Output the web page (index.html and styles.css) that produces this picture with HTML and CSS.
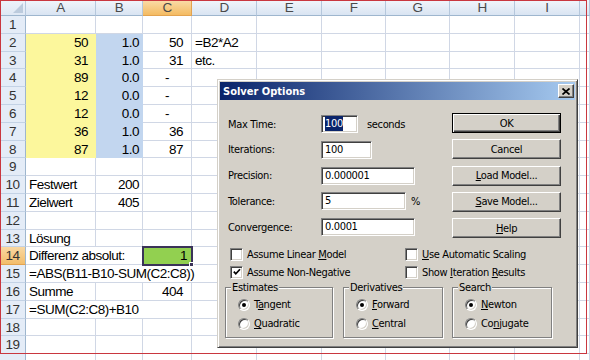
FILE: index.html
```html
<!DOCTYPE html>
<html>
<head>
<meta charset="utf-8">
<link rel="stylesheet" href="styles.css">
</head>
<body>
<div class="sheet">
  <div class="ch corner"><svg width="12" height="12" viewBox="0 0 12 12"><polygon points="11,1 11,11 1,11" fill="#bccbdd"/></svg></div>
  <div class="ch">A</div><div class="ch">B</div><div class="ch sel">C</div><div class="ch">D</div><div class="ch">E</div><div class="ch">F</div><div class="ch">G</div><div class="ch">H</div><div class="ch">I</div><div class="ch"></div>

  <div class="rh">1</div><div class="c"></div><div class="c"></div><div class="c"></div><div class="c"></div><div class="c"></div><div class="c"></div><div class="c"></div><div class="c"></div><div class="c"></div><div class="c"></div>

  <div class="rh">2</div><div class="c y n na">50</div><div class="c bl n nb">1.0</div><div class="c n nc">50</div><div class="c">=B2*A2</div><div class="c"></div><div class="c"></div><div class="c"></div><div class="c"></div><div class="c"></div><div class="c"></div>

  <div class="rh">3</div><div class="c y n na">31</div><div class="c bl n nb">1.0</div><div class="c n nc">31</div><div class="c">etc.</div><div class="c"></div><div class="c"></div><div class="c"></div><div class="c"></div><div class="c"></div><div class="c"></div>

  <div class="rh">4</div><div class="c y n na">89</div><div class="c bl n nb">0.0</div><div class="c n dash">-</div><div class="c"></div><div class="c"></div><div class="c"></div><div class="c"></div><div class="c"></div><div class="c"></div><div class="c"></div>

  <div class="rh">5</div><div class="c y n na">12</div><div class="c bl n nb">0.0</div><div class="c n dash">-</div><div class="c"></div><div class="c"></div><div class="c"></div><div class="c"></div><div class="c"></div><div class="c"></div><div class="c"></div>

  <div class="rh">6</div><div class="c y n na">12</div><div class="c bl n nb">0.0</div><div class="c n dash">-</div><div class="c"></div><div class="c"></div><div class="c"></div><div class="c"></div><div class="c"></div><div class="c"></div><div class="c"></div>

  <div class="rh">7</div><div class="c y n na">36</div><div class="c bl n nb">1.0</div><div class="c n nc">36</div><div class="c"></div><div class="c"></div><div class="c"></div><div class="c"></div><div class="c"></div><div class="c"></div><div class="c"></div>

  <div class="rh">8</div><div class="c y n na">87</div><div class="c bl n nb">1.0</div><div class="c n nc">87</div><div class="c"></div><div class="c"></div><div class="c"></div><div class="c"></div><div class="c"></div><div class="c"></div><div class="c"></div>

  <div class="rh">9</div><div class="c"></div><div class="c"></div><div class="c"></div><div class="c"></div><div class="c"></div><div class="c"></div><div class="c"></div><div class="c"></div><div class="c"></div><div class="c"></div>

  <div class="rh">10</div><div class="c">Festwert</div><div class="c n nb">200</div><div class="c"></div><div class="c"></div><div class="c"></div><div class="c"></div><div class="c"></div><div class="c"></div><div class="c"></div><div class="c"></div>

  <div class="rh">11</div><div class="c">Zielwert</div><div class="c n nb">405</div><div class="c"></div><div class="c"></div><div class="c"></div><div class="c"></div><div class="c"></div><div class="c"></div><div class="c"></div><div class="c"></div>

  <div class="rh">12</div><div class="c"></div><div class="c"></div><div class="c"></div><div class="c"></div><div class="c"></div><div class="c"></div><div class="c"></div><div class="c"></div><div class="c"></div><div class="c"></div>

  <div class="rh">13</div><div class="c">Lösung</div><div class="c"></div><div class="c"></div><div class="c"></div><div class="c"></div><div class="c"></div><div class="c"></div><div class="c"></div><div class="c"></div><div class="c"></div>

  <div class="rh sel">14</div><div class="c s2">Differenz absolut:</div><div class="c n cur">1</div><div class="c"></div><div class="c"></div><div class="c"></div><div class="c"></div><div class="c"></div><div class="c"></div><div class="c"></div>

  <div class="rh">15</div><div class="c s4">=ABS(B11-B10-SUM(C2:C8))</div><div class="c"></div><div class="c"></div><div class="c"></div><div class="c"></div><div class="c"></div><div class="c"></div>

  <div class="rh">16</div><div class="c">Summe</div><div class="c"></div><div class="c n nc">404</div><div class="c"></div><div class="c"></div><div class="c"></div><div class="c"></div><div class="c"></div><div class="c"></div><div class="c"></div>

  <div class="rh">17</div><div class="c s3">=SUM(C2:C8)+B10</div><div class="c"></div><div class="c"></div><div class="c"></div><div class="c"></div><div class="c"></div><div class="c"></div><div class="c"></div>

  <div class="rh">18</div><div class="c"></div><div class="c"></div><div class="c"></div><div class="c"></div><div class="c"></div><div class="c"></div><div class="c"></div><div class="c"></div><div class="c"></div><div class="c"></div>

  <div class="rh">19</div><div class="c"></div><div class="c"></div><div class="c"></div><div class="c"></div><div class="c"></div><div class="c"></div><div class="c"></div><div class="c"></div><div class="c"></div><div class="c"></div>

  <div class="rh"></div><div class="c"></div><div class="c"></div><div class="c"></div><div class="c"></div><div class="c"></div><div class="c"></div><div class="c"></div><div class="c"></div><div class="c"></div><div class="c"></div>
</div>

<div class="dlg">
  <div class="title">
    <span class="title-text">Solver Options</span>
    <span class="xbtn"><svg width="8" height="7" viewBox="0 0 8 7"><path d="M0.5 0.5 L7.5 6.5 M7.5 0.5 L0.5 6.5" stroke="#000" stroke-width="1.7"/></svg></span>
  </div>
  <div class="dbody">
    <div class="main">
      <div class="fields">
        <div class="frow"><span class="lbl">Max Time:</span><span class="inp w37"><span class="hl">100</span></span><span class="unit u9">seconds</span></div>
        <div class="frow"><span class="lbl">Iterations:</span><span class="inp w51">100</span></div>
        <div class="frow"><span class="lbl">Precision:</span><span class="inp w94">0.000001</span></div>
        <div class="frow"><span class="lbl">Tolerance:</span><span class="inp w85">5</span><span class="unit u5">%</span></div>
        <div class="frow"><span class="lbl">Convergence:</span><span class="inp w94">0.0001</span></div>
      </div>
      <div class="btns">
        <div class="btn def">OK</div>
        <div class="btn">Cancel</div>
        <div class="btn"><u>L</u>oad Model...</div>
        <div class="btn"><u>S</u>ave Model...</div>
        <div class="btn"><u>H</u>elp</div>
      </div>
    </div>
    <div class="checks">
      <div class="chk"><span class="cb"></span><span>Assume Linear <u>M</u>odel</span></div>
      <div class="chk"><span class="cb"></span><span><u>U</u>se Automatic Scaling</span></div>
      <div class="chk"><span class="cb"><svg width="8" height="8" viewBox="0 0 8 8"><path d="M0.8 3.6 L2.8 5.8 L7 1.2" fill="none" stroke="#000" stroke-width="1.7"/></svg></span><span>Assume Non-Negative</span></div>
      <div class="chk"><span class="cb"></span><span>Show <u>I</u>teration <u>R</u>esults</span></div>
    </div>
    <div class="groups">
      <fieldset class="grp g108">
        <legend>Estimates</legend>
        <div class="opt"><span class="rd on"></span><span>T<u>a</u>ngent</span></div>
        <div class="opt"><span class="rd"></span><span><u>Q</u>uadratic</span></div>
      </fieldset>
      <fieldset class="grp g100">
        <legend>Derivatives</legend>
        <div class="opt"><span class="rd on"></span><span><u>F</u>orward</span></div>
        <div class="opt"><span class="rd"></span><span><u>C</u>entral</span></div>
      </fieldset>
      <fieldset class="grp g100">
        <legend>Search</legend>
        <div class="opt"><span class="rd on"></span><span><u>N</u>ewton</span></div>
        <div class="opt"><span class="rd"></span><span>Co<u>n</u>jugate</span></div>
      </fieldset>
    </div>
  </div>
</div>

<div class="frame"></div>
</body>
</html>
```

FILE: styles.css
```css
html, body {
  margin: 0;
  padding: 0;
  background: #ffffff;
  overflow: hidden;
}
body {
  width: 590px;
  height: 360px;
  position: relative;
}

/* ---------- sheet ---------- */
.sheet {
  display: grid;
  grid-template-columns: 26px 70px 47px 49px 65px 65px 64px 64px 65px 65px 10px;
  grid-template-rows: 16px repeat(20, 17.8px);
  font-family: "Liberation Sans", Arial, sans-serif;
  font-size: 13.5px;
  letter-spacing: -0.5px;
  color: #000;
}
.ch {
  box-sizing: border-box;
  background: linear-gradient(#f2f6fb, #d9e4f2);
  border-right: 1px solid #b5c7dc;
  border-bottom: 1px solid #9eb6ce;
  text-align: center;
  line-height: 15px;
  color: #4a4a4a;
}
.ch.sel {
  background: linear-gradient(#fadcaa, #f4bb62);
  border-right-color: #e3a34f;
  border-bottom-color: #e3a34f;
}
.corner {
  display: flex;
  align-items: flex-end;
  justify-content: flex-end;
  background: linear-gradient(#eef3fa, #dfe8f4);
}
.corner svg {
  display: block;
  margin: 0 1px 1px 0;
}
.rh {
  box-sizing: border-box;
  background: #e4ecf7;
  border-right: 1px solid #9eb6ce;
  border-bottom: 1px solid #c3d2e5;
  text-align: center;
  line-height: 17.8px;
  color: #333;
}
.rh.sel {
  background: linear-gradient(#f9d8a2, #f3bd6b);
  border-bottom-color: #e3a34f;
}
.c {
  box-sizing: border-box;
  border-right: 1px solid #d0d7e5;
  border-bottom: 1px solid #d0d7e5;
  padding: 0 3px;
  white-space: nowrap;
  line-height: 17.8px;
  background: #fff;
}
.n { text-align: right; }
.na { padding-right: 7px; }
.nb { padding-right: 3px; }
.nc { padding-right: 8px; }
.dash { padding-right: 22px; }
.y {
  background: #fcf79c;
  border-color: #fcf79c;
}
.bl {
  background: #c2d6ef;
  border-color: #c2d6ef;
}
.s2 { grid-column: span 2; }
.s3 { grid-column: span 3; }
.s4 { grid-column: span 4; }
.cur {
  position: relative;
  z-index: 1;
  background: #92d050;
  border-color: #92d050;
  outline: 2px solid #3a3358;
  outline-offset: -1px;
  padding-right: 4px;
}
.cur::after {
  content: "";
  position: absolute;
  right: -3px;
  bottom: -3px;
  width: 5px;
  height: 5px;
  background: #3a3358;
  border: 1px solid #fff;
  box-sizing: border-box;
}

/* ---------- frame ---------- */
.frame {
  position: absolute;
  left: 0;
  top: 0;
  width: 587px;
  height: 354px;
  box-sizing: border-box;
  border: 1px solid #c9373f;
  pointer-events: none;
}

/* ---------- dialog ---------- */
.dlg {
  position: absolute;
  left: 217px;
  top: 79px;
  width: 361px;
  height: 269px;
  box-sizing: border-box;
  background: #d4d0c8;
  border: 1px solid;
  border-color: #d4d0c8 #404040 #404040 #d4d0c8;
  box-shadow: inset 1px 1px 0 #fff, inset -1px -1px 0 #808080;
  padding: 2px;
  display: flex;
  flex-direction: column;
  font-family: "DejaVu Sans Condensed", "DejaVu Sans", sans-serif;
  font-stretch: condensed;
  font-size: 11px;
  letter-spacing: -0.35px;
  color: #000;
}
.title {
  height: 18px;
  flex: none;
  background: linear-gradient(to right, #0a246a, #a6caf0);
  display: flex;
  align-items: center;
  justify-content: space-between;
  padding: 0 1px 0 3px;
}
.title-text {
  color: #fff;
  font-weight: bold;
  letter-spacing: 0;
}
.xbtn {
  width: 16px;
  height: 14px;
  box-sizing: border-box;
  background: #d4d0c8;
  border: 1px solid;
  border-color: #fff #404040 #404040 #fff;
  box-shadow: inset -1px -1px 0 #808080;
  display: flex;
  align-items: center;
  justify-content: center;
}
.xbtn svg { display: block; }

.dbody {
  flex: 1;
  padding: 0 14px 0 5px;
  display: flex;
  flex-direction: column;
}
.main {
  display: flex;
  justify-content: space-between;
  padding-top: 13px;
}
.fields {
  display: flex;
  flex-direction: column;
  gap: 7.8px;
  margin: 2px 0 0 3px;
}
.frow {
  display: flex;
  align-items: center;
  height: 18px;
}
.lbl { width: 93px; }
.inp {
  box-sizing: border-box;
  height: 18px;
  background: #fff;
  border: 1px solid;
  border-color: #808080 #fff #fff #808080;
  box-shadow: inset 1px 1px 0 #404040, inset -1px -1px 0 #d4d0c8;
  padding: 0 3px;
  line-height: 16px;
  white-space: nowrap;
}
.w37 { width: 37px; }
.w51 { width: 51px; }
.w85 { width: 85px; }
.w94 { width: 94px; }
.hl {
  background: #0a246a;
  color: #fff;
  padding: 1px 0;
}
.u9 { margin-left: 9px; }
.u5 { margin-left: 5px; }

.btns {
  display: flex;
  flex-direction: column;
  gap: 6.3px;
}
.btn {
  width: 109px;
  height: 20px;
  box-sizing: border-box;
  border: 1px solid;
  border-color: #fff #404040 #404040 #fff;
  box-shadow: inset -1px -1px 0 #808080;
  display: flex;
  align-items: center;
  justify-content: center;
}
.btn.def {
  border: 1px solid #000;
  box-shadow: inset 1px 1px 0 #fff, inset -1px -1px 0 #404040, inset -2px -2px 0 #808080;
}

.checks {
  display: grid;
  grid-template-columns: 175px auto;
  grid-auto-rows: 18px;
  margin-top: 7.3px;
  padding-left: 5px;
}
.chk {
  display: flex;
  align-items: center;
  gap: 4px;
}
.cb {
  width: 13px;
  height: 13px;
  box-sizing: border-box;
  background: #fff;
  border: 1px solid;
  border-color: #808080 #fff #fff #808080;
  box-shadow: inset 1px 1px 0 #404040, inset -1px -1px 0 #d4d0c8;
  display: flex;
  align-items: center;
  justify-content: center;
}
.cb svg { display: block; }

.groups {
  display: flex;
  gap: 10px;
}
.grp {
  margin: 0;
  padding: 1px 0 4px 12px;
  border: 1px solid #808080;
  box-shadow: 1px 1px 0 #fff, inset 1px 1px 0 #fff;
  min-width: 0;
  box-sizing: border-box;
}
.g108 { width: 108px; }
.g100 { width: 100px; }
.groups .grp:last-child { margin-left: -1px; }
.grp legend {
  padding: 0 1px;
  margin-left: -7px;
  background: #d4d0c8;
  line-height: 13px;
}
.opt {
  display: flex;
  align-items: center;
  gap: 4px;
  height: 19px;
}
.rd {
  width: 12px;
  height: 12px;
  box-sizing: border-box;
  border-radius: 50%;
  background: #fff;
  border: 1px solid;
  border-color: #808080 #fff #fff #808080;
  box-shadow: inset 1px 1px 0 #404040, inset -1px -1px 0 #d4d0c8;
  display: flex;
  align-items: center;
  justify-content: center;
}
.rd.on::after {
  content: "";
  width: 4px;
  height: 4px;
  border-radius: 50%;
  background: #000;
}
```
